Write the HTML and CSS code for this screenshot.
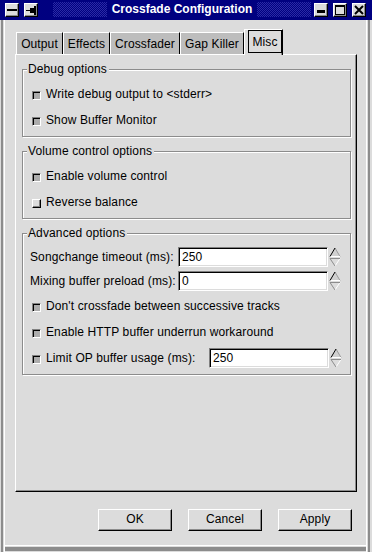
FILE: index.html
```html
<!DOCTYPE html>
<html>
<head>
<meta charset="utf-8">
<title>Crossfade Configuration</title>
<link rel="stylesheet" href="styles.css">
</head>
<body>
<div class="window">
  <div class="titlebar">
    <div class="tbtn"><svg viewBox="0 0 12 12"><rect x="1" y="5" width="10" height="2" fill="#000"/></svg></div>
    <div class="tbtn"><svg viewBox="0 0 12 12"><rect x="1" y="6" width="5" height="1" fill="#000"/><rect x="5" y="4" width="4" height="5" fill="#000"/><rect x="9" y="2" width="2" height="9" fill="#000"/></svg></div>
    <div class="title-area">
      <div class="stipple"></div>
      <div class="title">Crossfade Configuration</div>
      <div class="stipple"></div>
    </div>
    <div class="tbtn"><svg viewBox="0 0 12 12"><rect x="2" y="6" width="8" height="3" fill="#000"/></svg></div>
    <div class="tbtn"><svg viewBox="0 0 12 12"><rect x="1.5" y="1.5" width="9" height="9" fill="none" stroke="#000"/><rect x="1" y="1" width="10" height="2" fill="#000"/></svg></div>
    <div class="tbtn"><svg viewBox="0 0 12 12"><path d="M2 2 L10 10 M10 2 L2 10" stroke="#000" stroke-width="2"/></svg></div>
  </div>
  <div class="frame">
    <div class="client">
      <div class="notebook">
        <div class="tabs">
          <div class="tab tab-output">Output</div>
          <div class="tab tab-effects">Effects</div>
          <div class="tab tab-crossfader">Crossfader</div>
          <div class="tab tab-gap">Gap Killer</div>
          <div class="tab tab-misc active"><span class="focus">Misc</span></div>
        </div>
        <div class="panel">
          <div class="group">
            <div class="group-title">Debug options</div>
            <div class="check"><span class="box"></span><span class="label">Write debug output to &lt;stderr&gt;</span></div>
            <div class="check"><span class="box"></span><span class="label">Show Buffer Monitor</span></div>
          </div>
          <div class="group">
            <div class="group-title">Volume control options</div>
            <div class="check"><span class="box"></span><span class="label">Enable volume control</span></div>
            <div class="check"><span class="box off"></span><span class="label">Reverse balance</span></div>
          </div>
          <div class="group">
            <div class="group-title wide">Advanced options</div>
            <div class="spins">
              <div class="spinrow">
                <span class="spinlabel">Songchange timeout (ms):</span>
                <span class="entry">250</span>
                <svg class="spin" viewBox="0 0 12 20"><path d="M1 9.5 L6 1 L11 9.5 Z" fill="#d0d0d0"/><path d="M6 1 L11 9.5" stroke="#9a9a9a" fill="none"/><path d="M1 9.5 H11" stroke="#fff" fill="none"/><path d="M1 9.5 L6 1" stroke="#000" fill="none"/><path d="M1 11.5 H11 L6 19 Z" fill="#dcdcdc"/><path d="M11 11.5 L6 19" stroke="#fff" fill="none"/><path d="M6 19 L1 11.5 H11" stroke="#8c8c8c" fill="none"/></svg>
              </div>
              <div class="spinrow">
                <span class="spinlabel">Mixing buffer preload (ms):</span>
                <span class="entry">0</span>
                <svg class="spin" viewBox="0 0 12 20"><path d="M1 9.5 L6 1 L11 9.5 Z" fill="#d0d0d0"/><path d="M6 1 L11 9.5" stroke="#9a9a9a" fill="none"/><path d="M1 9.5 H11" stroke="#fff" fill="none"/><path d="M1 9.5 L6 1" stroke="#000" fill="none"/><path d="M1 11.5 H11 L6 19 Z" fill="#dcdcdc"/><path d="M11 11.5 L6 19" stroke="#fff" fill="none"/><path d="M6 19 L1 11.5 H11" stroke="#8c8c8c" fill="none"/></svg>
              </div>
            </div>
            <div class="check"><span class="box"></span><span class="label">Don't crossfade between successive tracks</span></div>
            <div class="check"><span class="box"></span><span class="label">Enable HTTP buffer underrun workaround</span></div>
            <div class="check">
              <span class="box"></span><span class="label">Limit OP buffer usage (ms):</span>
              <span class="entry short">250</span>
              <svg class="spin" viewBox="0 0 12 20"><path d="M1 9.5 L6 1 L11 9.5 Z" fill="#d0d0d0"/><path d="M6 1 L11 9.5" stroke="#9a9a9a" fill="none"/><path d="M1 9.5 H11" stroke="#fff" fill="none"/><path d="M1 9.5 L6 1" stroke="#000" fill="none"/><path d="M1 11.5 H11 L6 19 Z" fill="#dcdcdc"/><path d="M11 11.5 L6 19" stroke="#fff" fill="none"/><path d="M6 19 L1 11.5 H11" stroke="#8c8c8c" fill="none"/></svg>
            </div>
          </div>
        </div>
      </div>
      <div class="buttons">
        <div class="btn">OK</div>
        <div class="btn">Cancel</div>
        <div class="btn">Apply</div>
      </div>
    </div>
  </div>
</div>
</body>
</html>
```
FILE: styles.css
```css
html, body {
  margin: 0;
  padding: 0;
  background: #dcdcdc;
}
body {
  font-family: "Liberation Sans", Arial, sans-serif;
  font-size: 12px;
  color: #000;
  letter-spacing: 0.12px;
  overflow: hidden;
}
.window {
  width: 372px;
  height: 552px;
  background: #dcdcdc;
  display: flex;
  flex-direction: column;
  overflow: hidden;
}
.titlebar {
  height: 20px;
  box-sizing: border-box;
  background: #000080;
  display: flex;
  align-items: flex-start;
  padding: 2px 6px 0 5px;
  flex-shrink: 0;
}
.tbtn {
  width: 14px;
  height: 14px;
  box-sizing: border-box;
  margin-top: 1px;
  background: #dcdcdc;
  border: 1px solid;
  border-color: #fff #000 #000 #fff;
  box-shadow: inset -1px -1px 0 #8c8c8c;
  display: flex;
  flex-shrink: 0;
}
.tbtn svg {
  display: block;
  width: 12px;
  height: 12px;
}
.tbtn + .tbtn {
  margin-left: 5px;
}
.title-area {
  flex: 1;
  display: flex;
  height: 15px;
  margin: 0 3px 0 15px;
}
.stipple {
  flex: 1;
  background-color: #000080;
  background-image: conic-gradient(#2a2aa6 25%, transparent 0 50%, #2a2aa6 0 75%, transparent 0);
  background-size: 2px 2px;
}
.title {
  color: #fff;
  font-weight: bold;
  padding: 0 5px;
  line-height: 14px;
  letter-spacing: 0;
  white-space: nowrap;
}
.frame {
  flex: 1;
  display: flex;
  flex-direction: column;
  padding: 0 6px 7px 5px;
  box-shadow:
    inset 1px 0 0 #dcdcdc, inset 3px 0 0 #8c8c8c, inset 4px 0 0 #dcdcdc, inset 5px 0 0 #fff,
    inset -2px 0 0 #dcdcdc, inset -4px 0 0 #8c8c8c, inset -5px 0 0 #dcdcdc, inset -6px 0 0 #fff,
    inset 0 -1px 0 #dcdcdc, inset 0 -5px 0 #8c8c8c, inset 0 -6px 0 #dcdcdc, inset 0 -7px 0 #fff;
}
.client {
  flex: 1;
  display: flex;
  flex-direction: column;
  padding: 9px 9px 0 10px;
}
.notebook {
  display: flex;
  flex-direction: column;
}
.tabs {
  display: flex;
  align-items: flex-end;
  height: 25px;
  padding-left: 1px;
}
.tab {
  box-sizing: border-box;
  height: 22px;
  background: #bdbdbd;
  border-top: 1px solid #fff;
  border-left: 1px solid #fff;
  border-right: 1px solid #000;
  display: flex;
  align-items: center;
  justify-content: center;
  white-space: nowrap;
  line-height: 14px;
}
.tab-output { width: 47px; }
.tab-effects { width: 47px; }
.tab-crossfader { width: 70px; }
.tab-gap { width: 64px; }
.tab-misc { width: 39px; }
.tab.active {
  height: 26px;
  margin-bottom: -1px;
  background: #dcdcdc;
  position: relative;
  z-index: 1;
  box-shadow: inset -1px 0 0 #8c8c8c;
  padding: 0 0 2px 3px;
  align-items: stretch;
}
.focus {
  flex: 1;
  border: 1px solid #000;
  display: flex;
  align-items: center;
  justify-content: center;
}
.panel {
  height: 438px;
  box-sizing: border-box;
  border: 1px solid;
  border-color: #fff #000 #000 #fff;
  box-shadow: inset -1px -1px 0 #8c8c8c;
  padding: 14px 5px 0 6px;
  display: flex;
  flex-direction: column;
  gap: 14px;
}
.group {
  border: 1px solid #8c8c8c;
  box-shadow: inset 1px 1px 0 #fff, 1px 1px 0 #fff;
  display: flex;
  flex-direction: column;
  padding: 0 8px 3px 7px;
}
.group-title {
  align-self: flex-start;
  margin: -8px 0 4px -3px;
  padding: 0 2px 0 1px;
  background: #dcdcdc;
  line-height: 15px;
  white-space: nowrap;
}
.group-title.wide {
  margin-bottom: 6px;
}
.check {
  display: flex;
  align-items: flex-start;
  height: 26px;
  padding-left: 2px;
}
.box {
  width: 9px;
  height: 9px;
  box-sizing: border-box;
  flex-shrink: 0;
  margin: 10px 5px 0 0;
  border: 1px solid;
  border-color: #808080 #fff #fff #808080;
  box-shadow: inset 1px 1px 0 #000;
  background: #acacac;
}
.box.off {
  border-color: #fff #000 #000 #fff;
  box-shadow: inset -1px -1px 0 #808080;
  background: #dcdcdc;
}
.label {
  line-height: 26px;
  white-space: nowrap;
}
.spins {
  display: flex;
  flex-direction: column;
  gap: 4px;
  margin-bottom: 2px;
}
.spinrow {
  display: flex;
  align-items: center;
  height: 20px;
}
.spinlabel {
  width: 148px;
  flex-shrink: 0;
  line-height: 20px;
  white-space: nowrap;
}
.entry {
  width: 150px;
  height: 20px;
  box-sizing: border-box;
  flex-shrink: 0;
  background: #fff;
  border: 1px solid;
  border-color: #808080 #fff #fff #808080;
  box-shadow: inset 1px 1px 0 #000, inset -1px -1px 0 #dcdcdc;
  padding-left: 3px;
  line-height: 18px;
}
.entry.short {
  width: 120px;
  margin-left: auto;
  align-self: center;
}
.spin {
  display: block;
  width: 12px;
  height: 20px;
  margin-left: 1px;
  flex-shrink: 0;
}
.check .spin {
  align-self: center;
}
.buttons {
  display: flex;
  justify-content: flex-end;
  gap: 16px;
  margin-top: 17px;
  padding-right: 5px;
}
.btn {
  width: 74px;
  height: 22px;
  box-sizing: border-box;
  border: 1px solid;
  border-color: #fff #000 #000 #fff;
  box-shadow: inset -1px -1px 0 #8c8c8c;
  background: #dcdcdc;
  display: flex;
  align-items: center;
  justify-content: center;
  padding-bottom: 2px;
  line-height: 14px;
}
```
